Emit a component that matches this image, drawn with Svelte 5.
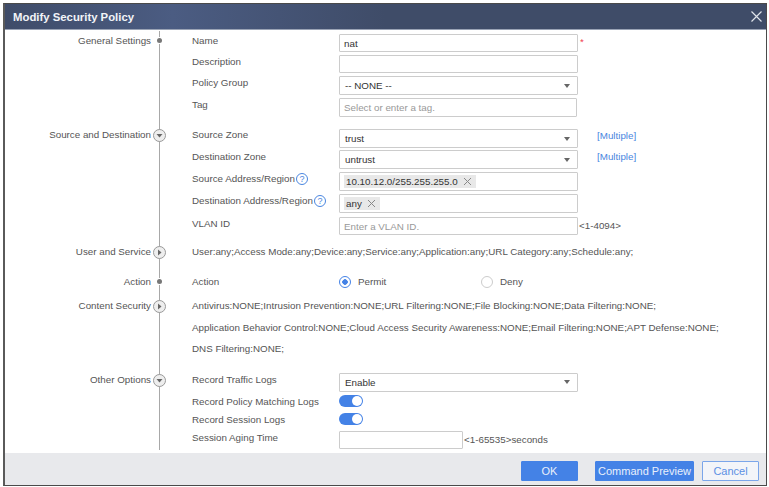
<script>
  // one section per block of the policy form
  const summary = {
    user: 'User:any;Access Mode:any;Device:any;Service:any;Application:any;URL Category:any;Schedule:any;',
    content: [
      'Antivirus:NONE;Intrusion Prevention:NONE;URL Filtering:NONE;File Blocking:NONE;Data Filtering:NONE;',
      'Application Behavior Control:NONE;Cloud Access Security Awareness:NONE;Email Filtering:NONE;APT Defense:NONE;',
      'DNS Filtering:NONE;'
    ]
  };
</script>

{#snippet marker(kind)}
  {#if kind === 'dot'}
    <span class="marker dot"></span>
  {:else}
    <span class="marker circle">
      <svg width="7" height="7" viewBox="0 0 7 7">
        {#if kind === 'down'}
          <path d="M0.5 2 L6.5 2 L3.5 5.5 Z" fill="#666" />
        {:else}
          <path d="M2 0.5 L2 6.5 L5.5 3.5 Z" fill="#666" />
        {/if}
      </svg>
    </span>
  {/if}
{/snippet}

{#snippet select(value)}
  <div class="field select">
    <span>{value}</span>
    <svg class="caret" width="6" height="4" viewBox="0 0 6 4"><path d="M0 0 H6 L3 4 Z" fill="#666" /></svg>
  </div>
{/snippet}

{#snippet chip(text)}
  <span class="chip">
    {text}
    <svg width="9" height="9" viewBox="0 0 9 9"><path d="M1 1 L8 8 M8 1 L1 8" stroke="#888" stroke-width="1" fill="none" /></svg>
  </span>
{/snippet}

<div class="dialog">
  <header class="title">
    <h1>Modify Security Policy</h1>
    <svg class="close" width="11" height="11" viewBox="0 0 11 11"><path d="M0.5 0.5 L10.5 10.5 M10.5 0.5 L0.5 10.5" stroke="#dfe3ea" stroke-width="1.2" fill="none" /></svg>
  </header>

  <div class="body">
    <section class="section general">
      <div class="side">General Settings</div>
      <div class="main">
        {@render marker('dot')}
        <div class="row"><span class="label">Name</span><div class="field short">nat</div><span class="req">*</span></div>
        <div class="row"><span class="label">Description</span><div class="field short"></div></div>
        <div class="row"><span class="label">Policy Group</span>{@render select('-- NONE --')}</div>
        <div class="row"><span class="label">Tag</span><div class="field tag placeholder">Select or enter a tag.</div></div>
      </div>
    </section>

    <section class="section source">
      <div class="side">Source and Destination</div>
      <div class="main">
        {@render marker('down')}
        <div class="row tight"><span class="label">Source Zone</span>{@render select('trust')}<a class="multi" href="#multi">[Multiple]</a></div>
        <div class="row"><span class="label">Destination Zone</span>{@render select('untrust')}<a class="multi" href="#multi">[Multiple]</a></div>
        <div class="row">
          <span class="label">Source Address/Region<span class="help">?</span></span>
          <div class="field tags">{@render chip('10.10.12.0/255.255.255.0')}</div>
        </div>
        <div class="row loose">
          <span class="label">Destination Address/Region<span class="help">?</span></span>
          <div class="field tags">{@render chip('any')}</div>
        </div>
        <div class="row"><span class="label">VLAN ID</span><div class="field short placeholder">Enter a VLAN ID.</div><span class="hint">&lt;1-4094&gt;</span></div>
      </div>
    </section>

    <section class="section user">
      <div class="side">User and Service</div>
      <div class="main">
        {@render marker('right')}
        <p class="line">{summary.user}</p>
      </div>
    </section>

    <section class="section action">
      <div class="side">Action</div>
      <div class="main">
        {@render marker('dot')}
        <div class="row plain">
          <span class="label">Action</span>
          <span class="radio on"><i></i>Permit</span>
          <span class="radio"><i></i>Deny</span>
        </div>
      </div>
    </section>

    <section class="section content">
      <div class="side">Content Security</div>
      <div class="main">
        {@render marker('right')}
        {#each summary.content as line}
          <p class="line wide">{line}</p>
        {/each}
      </div>
    </section>

    <section class="section other">
      <div class="side">Other Options</div>
      <div class="main">
        {@render marker('down')}
        <div class="row"><span class="label">Record Traffic Logs</span>{@render select('Enable')}</div>
        <div class="row slim"><span class="label">Record Policy Matching Logs</span><span class="toggle"></span></div>
        <div class="row slim"><span class="label">Record Session Logs</span><span class="toggle"></span></div>
        <div class="row last"><span class="label">Session Aging Time</span><div class="field aging"></div><span class="hint">&lt;1-65535&gt;seconds</span></div>
      </div>
    </section>
  </div>

  <footer class="actions">
    <button class="primary ok">OK</button>
    <button class="primary preview">Command Preview</button>
    <button class="cancel">Cancel</button>
  </footer>
</div>

<style>
  :global(body) {
    margin: 0;
    background: #fff;
  }

  .dialog {
    box-sizing: border-box;
    width: 764px;
    height: 483px;
    margin: 3px 2px 0 3px;
    border: 1px solid #4a4a4a;
    border-left: 2px solid #5a5a5a;
    background: #fff;
    display: flex;
    flex-direction: column;
    font-family: "Liberation Sans", Arial, sans-serif;
    font-size: 9.8px;
    line-height: 14px;
    color: #555;
  }

  .title {
    flex: none;
    height: 26px;
    display: flex;
    align-items: center;
    justify-content: space-between;
    padding: 0 4px 0 8px;
    background: linear-gradient(90deg, #3f4c69 0%, #4b5c82 22%, #3f4c68 50%, #3f4c68 100%);
    border-bottom: 1px solid #9aa3b5;
    box-sizing: border-box;
  }

  h1 {
    margin: 0;
    font-size: 11.35px;
    font-weight: bold;
    color: #f2f4f8;
  }

  .body {
    flex: 1;
    padding: 1px 0 3px;
  }

  .section {
    display: flex;
  }

  .side {
    box-sizing: border-box;
    width: 154px;
    flex: none;
    padding-right: 8px;
    text-align: right;
  }

  .general .side { padding-top: 3px; }
  .general .main { padding-top: 3px; padding-bottom: 9px; }
  .source .main { padding-bottom: 7px; }
  .source .side { margin-top: -1px; }
  .user .main { padding-bottom: 16px; }
  .action .main { padding-bottom: 10px; }
  .content .main { padding-bottom: 9px; }

  .main {
    position: relative;
    flex: 1;
    border-left: 1px solid #a8a8a8;
    padding-left: 32px;
  }

  .marker {
    position: absolute;
    box-sizing: border-box;
    background: #fff;
  }

  .dot {
    left: -3px;
    top: 4px;
    width: 5px;
    height: 5px;
    border-radius: 50%;
    background: #777;
    box-shadow: 0 0 0 1px #fff;
  }

  .general .dot { top: 7px; }

  .circle {
    left: -7px;
    top: 0;
    width: 13px;
    height: 13px;
    border: 1px solid #999;
    border-radius: 50%;
    display: flex;
    align-items: center;
    justify-content: center;
    background: #eee;
  }

  .user .circle,
  .content .circle,
  .other .circle {
    top: 1px;
  }

  .row {
    display: flex;
    align-items: flex-start;
    margin-bottom: 3px;
  }

  .row.tight {
    margin-bottom: 2px;
  }

  .row.tight .label {
    margin-top: -1px;
  }

  .row.loose {
    margin-bottom: 4px;
  }

  .row.slim {
    height: 15px;
  }

  .row.last {
    margin-bottom: 1px;
  }

  .row.plain {
    margin-bottom: 0;
    height: 14px;
    align-items: center;
  }

  .label {
    flex: none;
    width: 147px;
    display: flex;
    align-items: center;
    gap: 1px;
  }

  .field {
    box-sizing: border-box;
    width: 239px;
    height: 19px;
    border: 1px solid #ccc;
    border-radius: 1px;
    padding-left: 4px;
    line-height: 17px;
    color: #333;
    background: #fff;
  }

  .field.short {
    height: 18px;
    line-height: 18px;
  }

  .field.tag {
    width: 238px;
  }

  .field.aging {
    width: 124px;
    height: 18px;
  }

  .field.placeholder {
    color: #999;
  }

  .select {
    display: flex;
    align-items: center;
    justify-content: space-between;
    padding: 0 7px 0 5px;
  }

  .tags {
    display: flex;
    align-items: center;
  }

  .chip {
    display: inline-flex;
    align-items: center;
    gap: 5px;
    height: 13px;
    padding: 0 4px 0 2px;
    background: #e8e8e8;
    color: #333;
  }

  .req {
    margin-left: 2px;
    color: #f0404a;
    line-height: 16px;
  }

  .hint {
    margin-left: 1px;
    line-height: 18px;
    color: #555;
  }

  .multi {
    margin-left: 19px;
    color: #4a86e0;
    text-decoration: none;
  }

  .help {
    box-sizing: border-box;
    width: 12px;
    height: 12px;
    border: 1px solid #4a86e0;
    border-radius: 50%;
    color: #4a86e0;
    font-size: 9px;
    line-height: 10px;
    text-align: center;
  }

  .line {
    margin: 0;
  }

  .line.wide {
    height: 21.5px;
  }

  .radio {
    width: 142px;
    display: flex;
    align-items: center;
    gap: 7px;
  }

  .radio i {
    box-sizing: border-box;
    width: 12px;
    height: 12px;
    border: 1px solid #ccc;
    border-radius: 50%;
    background: #fff;
  }

  .radio.on i {
    border-color: #4482e6;
    background: radial-gradient(circle, #4482e6 0 2.5px, #fff 3px);
  }

  .toggle {
    position: relative;
    width: 24px;
    height: 12px;
    border-radius: 6px;
    background: #4482e6;
  }

  .toggle::after {
    content: "";
    position: absolute;
    right: 1px;
    top: 1px;
    width: 10px;
    height: 10px;
    border-radius: 50%;
    background: #fff;
  }

  .actions {
    flex: none;
    height: 32px;
    box-sizing: border-box;
    padding: 8px 7px 0 0;
    display: flex;
    justify-content: flex-end;
    background: #e8e9ec;
  }

  button {
    box-sizing: border-box;
    height: 20px;
    padding: 0;
    border: 1px solid #4482e6;
    border-radius: 1px;
    font: inherit;
    font-size: 11px;
  }

  .primary {
    background: #4482e6;
    color: #e9f0fb;
  }

  .ok {
    width: 57px;
    margin-right: 17px;
  }

  .preview {
    width: 99px;
    margin-right: 8px;
  }

  .cancel {
    width: 57px;
    background: #f3f5f9;
    color: #5b90e4;
    border-color: #7ba6ea;
  }
</style>
